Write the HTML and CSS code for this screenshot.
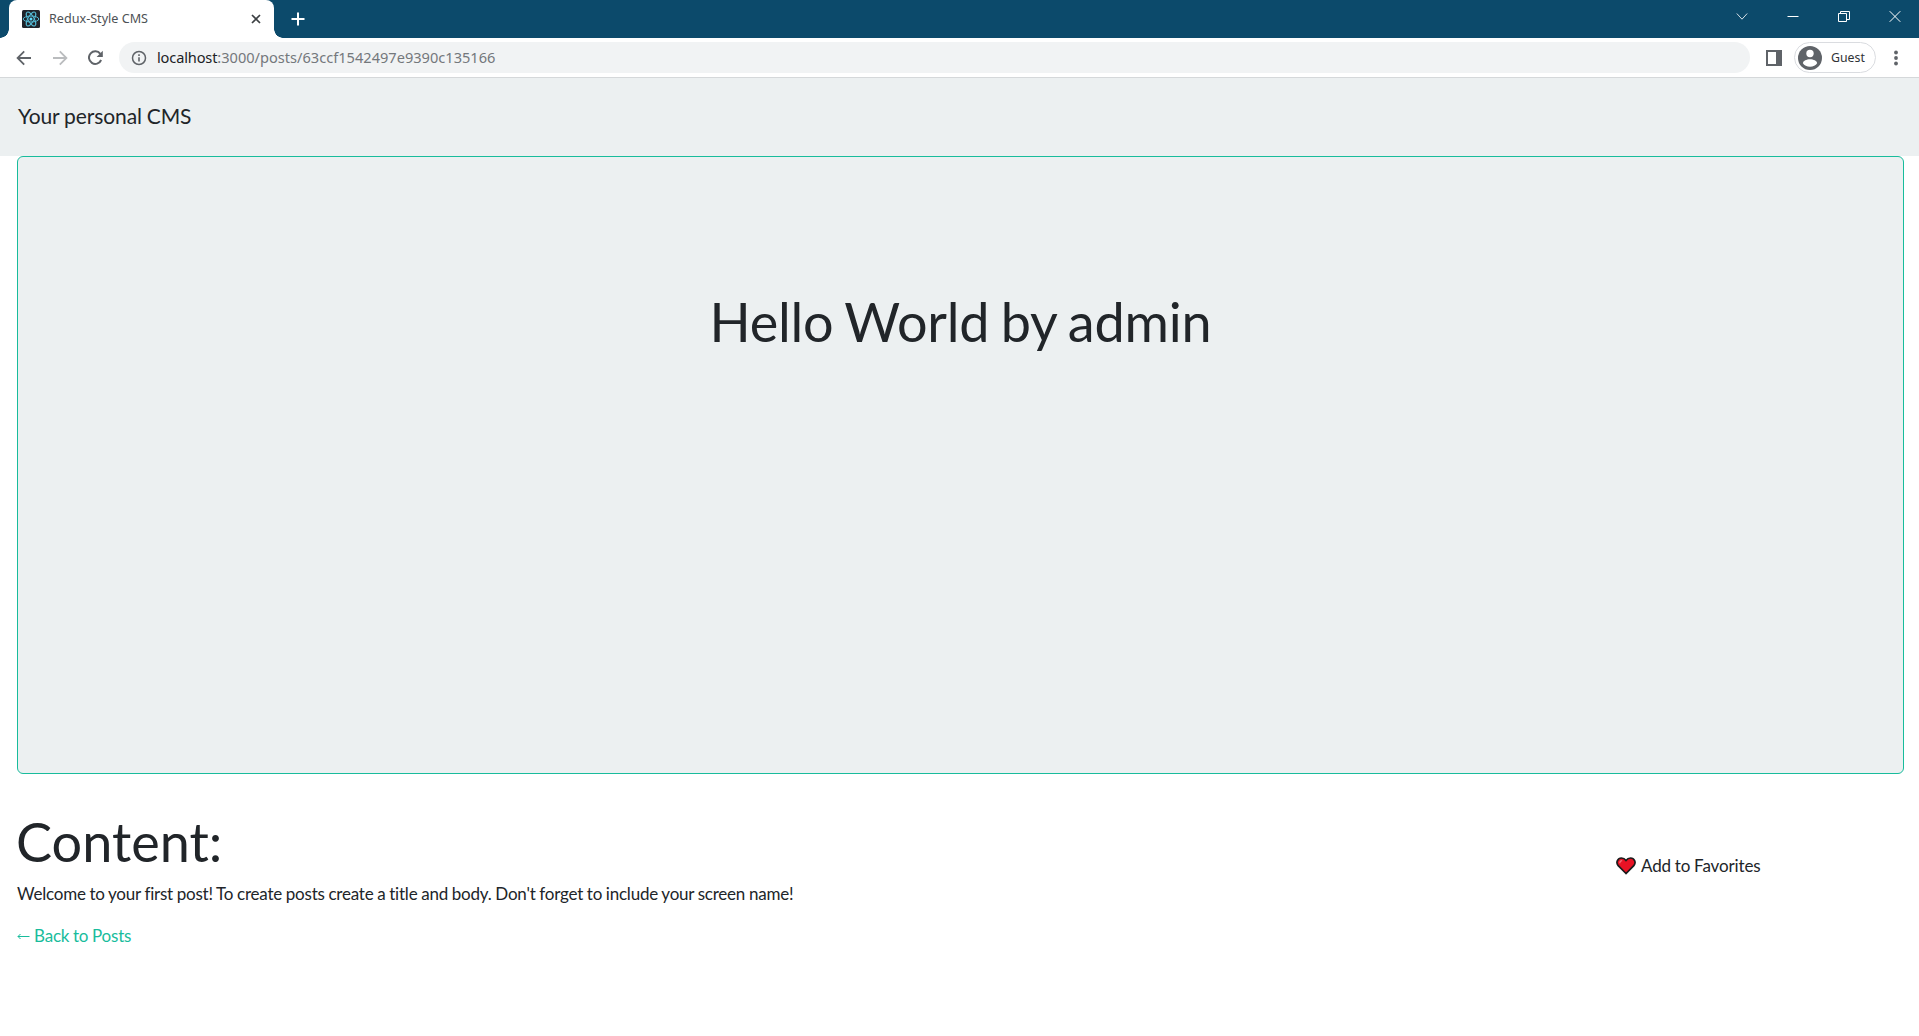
FILE: index.html
```html
<!DOCTYPE html>
<html lang="en">
<head>
<meta charset="utf-8">
<title>Redux-Style CMS</title>
<link rel="stylesheet" href="styles.css">
</head>
<body>
<div class="tabstrip">
  <div class="tab">
    <svg class="favicon" viewBox="0 0 18 18" width="18" height="18"><rect width="18" height="18" rx="1.5" fill="#20232a"/><g fill="none" stroke="#53b9d3" stroke-width="1"><ellipse cx="9" cy="9" rx="7.8" ry="3"/><ellipse cx="9" cy="9" rx="7.8" ry="3" transform="rotate(60 9 9)"/><ellipse cx="9" cy="9" rx="7.8" ry="3" transform="rotate(120 9 9)"/></g><circle cx="9" cy="9" r="1.5" fill="#61dafb"/></svg>
    <span class="tab-title">Redux-Style CMS</span>
    <svg class="tab-close" viewBox="0 0 10 10" width="10" height="10"><path d="M1 1l8 8M9 1l-8 8" stroke="#3c4043" stroke-width="1.7"/></svg>
  </div>
  <svg class="new-tab" viewBox="0 0 14 14" width="14" height="14"><path d="M7 .5v13M.5 7h13" stroke="#fff" stroke-width="2"/></svg>
  <div class="window-controls">
    <svg viewBox="0 0 12 12" width="12" height="12"><path d="M.8 2.500L6 8.200 11.2 2.500" fill="none" stroke="#d5dfe6"/></svg>
    <svg viewBox="0 0 12 12" width="12" height="12"><path d="M.5 5.500h11" stroke="#fff"/></svg>
    <svg viewBox="0 0 12 12" width="12" height="12"><path d="M.5 2.500h8v8h-8zM2.500 2.500V.5h9v8H8.500" fill="none" stroke="#fff"/></svg>
    <svg viewBox="0 0 12 12" width="12" height="12"><path d="M.7.200l10.600 10.600M11.300.200L.7 10.800" stroke="#fff"/></svg>
  </div>
</div>
<div class="toolbar">
  <div class="nav-buttons">
    <svg viewBox="0 0 16 16" width="16" height="16"><path d="M15 8H2M8.200 1.400L1.600 8l6.600 6.600" fill="none" stroke="#5f6368" stroke-width="1.800"/></svg>
    <svg viewBox="0 0 16 16" width="16" height="16"><path d="M1 8h13M7.800 1.400L14.400 8l-6.600 6.600" fill="none" stroke="#babcbe" stroke-width="1.800"/></svg>
    <svg viewBox="0 0 16 16" width="16" height="16"><path d="M12.300 3.800A6.300 6.300 0 1 0 13.100 10" fill="none" stroke="#5f6368" stroke-width="2"/><path d="M14.800.8v6.200H8.600z" fill="#5f6368"/></svg>
  </div>
  <div class="address">
    <svg viewBox="0 0 16 16" width="16" height="16"><circle cx="8" cy="8" r="6.500" fill="none" stroke="#5f6368" stroke-width="1.500"/><path d="M8 7.200v4.400M8 4.300V6" stroke="#5f6368" stroke-width="1.600"/></svg>
    <span class="url"><span class="host">localhost</span>:3000/posts/63ccf1542497e9390c135166</span>
  </div>
  <svg class="side-panel" viewBox="0 0 16 16" width="16" height="16"><path fill="#5f6368" fill-rule="evenodd" d="M0 0h16v16H0zM2 2v12h8V2z"/></svg>
  <div class="profile">
    <svg viewBox="0 0 24 24" width="24" height="24"><circle cx="12" cy="12" r="12" fill="#5f6368"/><circle cx="12" cy="7.500" r="3.700" fill="#fff"/><path d="M4.900 17.300c0-2.400 3.700-4 7.100-4s7.100 1.600 7.100 4c-1.300 2-4 3.400-7.100 3.400s-5.800-1.400-7.100-3.400z" fill="#fff"/></svg>
    <span class="profile-name">Guest</span>
  </div>
  <svg class="menu" viewBox="0 0 4 16" width="4" height="16"><g fill="#5f6368"><circle cx="2" cy="2.500" r="1.900"/><circle cx="2" cy="8" r="1.900"/><circle cx="2" cy="13.500" r="1.900"/></g></svg>
</div>
<header class="navbar"><span class="brand">Your personal CMS</span></header>
<main>
  <section class="card"><h1 class="headline">Hello World by admin</h1></section>
  <section class="post">
    <div class="post-text">
      <h2 class="content-title">Content:</h2>
      <p class="body-text">Welcome to your first post! To create posts create a title and body. Don't forget to include your screen name!</p>
      <a class="back"><svg viewBox="0 0 13 7" width="13" height="7"><path d="M1 3.500h11.500M3.500 1L1 3.500 3.500 6" fill="none" stroke="#18bc9c"/></svg><span class="back-label">Back to Posts</span></a>
    </div>
    <div class="favorite">
      <svg class="heart" viewBox="0 0 20 18" width="20" height="18"><path d="M10 16.500L2.200 8.700C-.6 5.200 1.800 1 5.400 1 7.500 1 9 2 10 3.400 11 2 12.500 1 14.600 1c3.600 0 6 4.200 3.200 7.700z" fill="#e81224" stroke="#1b1b1b" stroke-width="1.700"/><path d="M3.800 6.300c0-1.700 1-2.700 2.400-2.700" fill="none" stroke="#f4707b" stroke-width="1.300"/></svg>
      <span class="favorite-label">Add to Favorites</span>
    </div>
  </section>
</main>
</body>
</html>
```
FILE: styles.css
```css
* { box-sizing: border-box; }
body { margin: 0; height: 1036px; overflow: hidden; background: #fff; color: #212529; font-family: Lato, sans-serif; white-space: nowrap; }
svg { display: block; flex: none; }
h1, h2, p { margin: 0; font-weight: 400; }
.tabstrip { display: flex; height: 38px; background: #0c4a6b; padding-left: 9px; }
.tab { position: relative; display: flex; align-items: center; width: 265px; height: 38px; padding: 0 13px; background: #fff; border-radius: 8px 8px 0 0; }
.tab::before, .tab::after { content: ""; position: absolute; bottom: 0; width: 9px; height: 9px; }
.tab::before { left: -9px; background: radial-gradient(circle at 0 0, transparent 8.5px, #fff 9px); }
.tab::after { right: -9px; background: radial-gradient(circle at 100% 0, transparent 8.5px, #fff 9px); }
.tab-title { flex: 1; margin-left: 9px; color: #4d5155; font: 12.6px/18px "Noto Sans", sans-serif; }
.new-tab { margin: 12px 0 0 17px; }
.window-controls { display: flex; gap: 39px; margin: 11px 18px 0 auto; }
.toolbar { display: flex; align-items: center; height: 40px; border-bottom: 1px solid #d5d8da; padding: 0 21px 0 16px; }
.nav-buttons { display: flex; gap: 20px; width: 103px; }
.address { display: flex; align-items: center; width: 1631px; height: 31px; padding-left: 12px; border-radius: 16px; background: #f1f3f4; }
.url { margin-left: 10px; padding-bottom: 2px; color: #74787c; font: 14.6px/20px "Noto Sans", sans-serif; }
.host { color: #202124; letter-spacing: -0.15px; }
.side-panel { margin-left: 16px; }
.profile { display: flex; align-items: center; width: 82px; height: 31px; margin-left: 12px; padding-left: 3px; border: 1px solid #dadce0; border-radius: 16px; }
.profile-name { margin-left: 9px; color: #303236; font: 12.3px/18px "Noto Sans", sans-serif; }
.menu { margin-left: auto; }
.navbar { display: flex; align-items: center; height: 78px; padding: 0 0 2px 18px; background: #ecf0f1; }
.brand { font-size: 21px; line-height: 32px; letter-spacing: -0.1px; word-spacing: -0.4px; }
main { padding: 0 15px 0 17px; }
.card { height: 618px; padding-top: 133px; background: #ecf0f1; border: 1px solid #18bc9c; border-radius: 6px; text-align: center; }
.headline, .content-title { font-size: 54px; line-height: 64px; }
.headline { letter-spacing: -0.2px; word-spacing: -2.2px; }
.post { display: flex; justify-content: space-between; padding-top: 36px; }
.content-title { margin-left: -1px; }
.body-text { margin-top: 7px; font-size: 17px; line-height: 26px; letter-spacing: -0.22px; word-spacing: -0.35px; }
.back { display: flex; align-items: center; gap: 4px; margin-top: 16px; color: #18bc9c; font-size: 17px; line-height: 26px; letter-spacing: -0.2px; word-spacing: -0.4px; }
.favorite { display: flex; align-items: center; gap: 5px; width: 288px; height: 26px; margin-top: 42px; font-size: 17px; letter-spacing: -0.12px; word-spacing: -0.4px; }
.heart { margin-top: 2px; }
```
